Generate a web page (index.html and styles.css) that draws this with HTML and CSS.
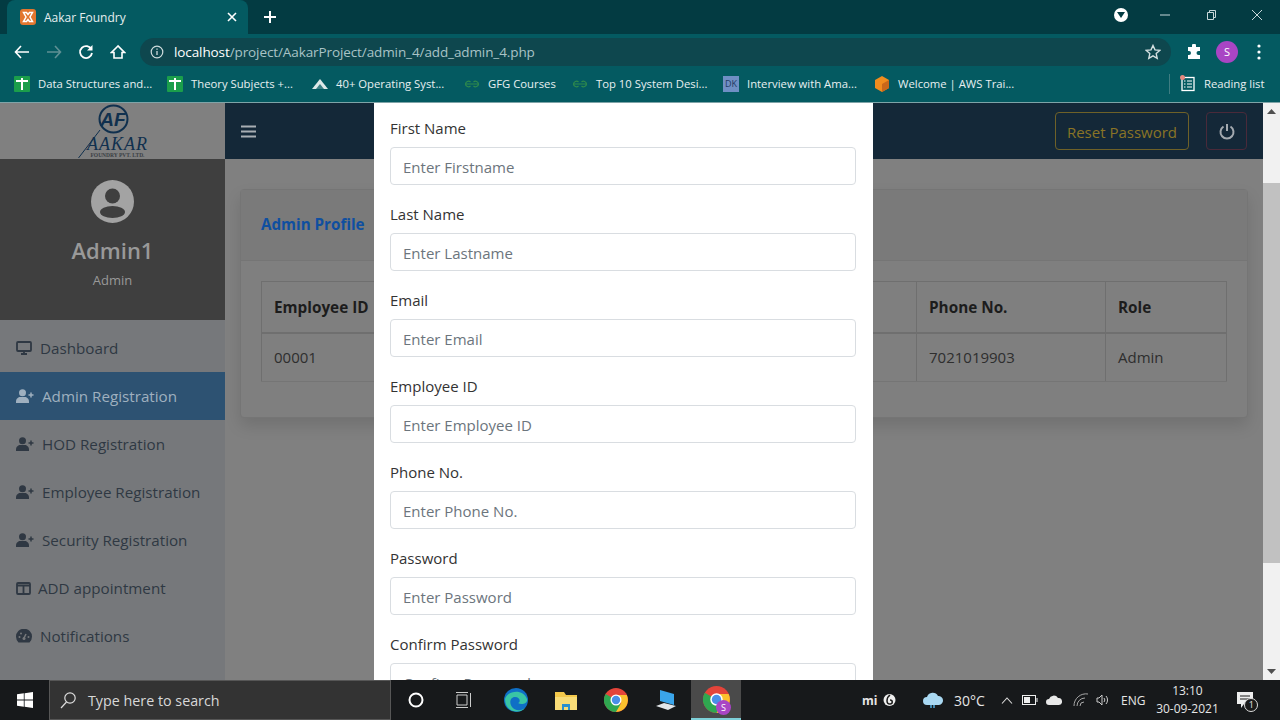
FILE: index.html
```html
<!DOCTYPE html>
<html lang="en">
<head>
  <meta charset="UTF-8" />
  <title>Aakar Foundry</title>
  <link rel="stylesheet" href="styles.css">
</head>
<body>
  <div class="tabstrip">
    <div class="tab">
      <svg class="tab-icon" width="16" height="16" viewBox="0 0 16 16"><rect width="16" height="16" rx="3" fill="#e2762f"/><path d="M3.500 3.500h3L8 5.500l1.500-2h3L10 8l2.500 4.500h-3L8 10.500l-1.500 2h-3L6 8z" fill="none" stroke="#fff" stroke-width="1.500"/></svg>
      <span class="tab-title">Aakar Foundry</span>
      <svg width="10" height="10" viewBox="0 0 10 10"><path d="M1 1l8 8M9 1l-8 8" stroke="#fff" stroke-width="1.600"/></svg>
    </div>
    <svg class="new-tab" width="12" height="12" viewBox="0 0 12 12"><path d="M6 0v12M0 6h12" stroke="#fff" stroke-width="2"/></svg>
    <div class="window-btns">
      <span class="profile-dot"><svg width="8" height="6" viewBox="0 0 8 6"><path d="M0 0h8L4 6z" fill="#033b42"/></svg></span>
      <svg width="46" height="12" viewBox="0 0 46 12"><path d="M18 6h10" stroke="#c8d8da"/></svg>
      <svg width="46" height="12" viewBox="0 0 46 12"><path d="M19.500 3.500h6v7h-6zM21.500 3.500v-2h6v7h-2" fill="none" stroke="#c8d8da"/></svg>
      <svg width="46" height="12" viewBox="0 0 46 12"><path d="M18 1l10 10M28 1L18 11" stroke="#c8d8da"/></svg>
    </div>
  </div>

  <div class="toolbar">
    <svg width="16" height="14" viewBox="0 0 16 14"><path d="M15 7H2M7 1L1.500 7 7 13" fill="none" stroke="#fff" stroke-width="1.600"/></svg>
    <svg width="16" height="14" viewBox="0 0 16 14"><path d="M1 7h13M9 1l5.500 6L9 13" fill="none" stroke="#5f9094" stroke-width="1.600"/></svg>
    <svg width="16" height="16" viewBox="0 0 16 16"><path d="M13.500 5.500A6 6 0 1 0 14 9" fill="none" stroke="#fff" stroke-width="1.800"/><path d="M14.500 1v5.500H9z" fill="#fff"/></svg>
    <svg width="16" height="16" viewBox="0 0 16 16"><path d="M8 2L1.500 8.500h2.500v5.500h8V8.500h2.500z" fill="none" stroke="#fff" stroke-width="1.600"/></svg>
    <div class="omnibox">
      <svg width="14" height="14" viewBox="0 0 14 14"><circle cx="7" cy="7" r="5.800" fill="none" stroke="#cfdcdd" stroke-width="1.200"/><path d="M7 6v4M7 3.500v1.200" stroke="#cfdcdd" stroke-width="1.300"/></svg>
      <span class="url"><b>localhost</b>/project/AakarProject/admin_4/add_admin_4.php</span>
      <svg class="star" width="16" height="16" viewBox="0 0 16 16"><path d="M8 1.500l2 4.400 4.800.5-3.600 3.200 1 4.700L8 11.900l-4.200 2.400 1-4.700L1.200 6.400 6 5.900z" fill="none" stroke="#d5e0e1" stroke-width="1.400"/></svg>
    </div>
    <svg class="puzzle" width="16" height="16" viewBox="0 0 16 16"><path d="M6 1.500a2 2 0 0 1 4 0V3h4v4h-1.500a2 2 0 0 0 0 4H14v4H2v-4h1a2 2 0 0 0 0-4H2V3h4z" fill="#fff"/></svg>
    <span class="avatar">S</span>
    <svg class="kebab" width="4" height="16" viewBox="0 0 4 16"><circle cx="2" cy="2" r="1.600" fill="#fff"/><circle cx="2" cy="8" r="1.600" fill="#fff"/><circle cx="2" cy="14" r="1.600" fill="#fff"/></svg>
  </div>

  <div class="bookmarks">
    <div class="bookmark"><span class="sheet-icon"></span>Data Structures and...</div>
    <div class="bookmark"><span class="sheet-icon"></span>Theory Subjects +...</div>
    <div class="bookmark"><svg width="16" height="10" viewBox="0 0 16 10"><path d="M0 10L8 0l8 10z" fill="#dfe8e8"/><path d="M4 10l4-5 4 5z" fill="#3c7f84"/></svg>40+ Operating Syst...</div>
    <div class="bookmark"><svg class="gfg" width="16" height="8" viewBox="0 0 16 8"><path d="M8 4H1.500a3 3 0 0 1 5-2M8 4h6.500a3 3 0 0 0-5-2M1.500 4a3 3 0 0 0 5 2M14.500 4a3 3 0 0 1-5 2" fill="none" stroke="#2f8a4c" stroke-width="1.200"/></svg>GFG Courses</div>
    <div class="bookmark"><svg class="gfg" width="16" height="8" viewBox="0 0 16 8"><path d="M8 4H1.500a3 3 0 0 1 5-2M8 4h6.500a3 3 0 0 0-5-2M1.500 4a3 3 0 0 0 5 2M14.500 4a3 3 0 0 1-5 2" fill="none" stroke="#2f8a4c" stroke-width="1.200"/></svg>Top 10 System Desi...</div>
    <div class="bookmark"><span class="dk-icon">DK</span>Interview with Ama...</div>
    <div class="bookmark"><svg width="16" height="18" viewBox="0 0 16 18"><path d="M8 1l7 4v8l-7 4-7-4V5z" fill="#f08c1e"/><path d="M8 9l7-4v8l-7 4z" fill="#c9671a"/></svg>Welcome | AWS Trai...</div>
    <div class="reading-list">
      <svg width="16" height="17" viewBox="0 0 16 17"><rect x="2" y="2.500" width="12" height="13" fill="none" stroke="#fff" stroke-width="1.300"/><path d="M4 6h1.500M7 6h5M4 9h1.500M7 9h5M4 12h1.500M7 12h5" stroke="#fff"/><circle cx="2.500" cy="2.500" r="2.500" fill="#e58a80"/></svg>
      Reading list
    </div>
  </div>

  <div class="viewport">
    <div class="app">
      <aside class="sidebar">
        <div class="logo">
          <svg width="76" height="56" viewBox="0 0 76 56">
            <ellipse cx="38.500" cy="16" rx="14" ry="13.500" fill="none" stroke="#10304e" stroke-width="2"/>
            <text x="38" y="23" class="logo-mark">AF</text>
            <path d="M3.500 55L25 27" stroke="#10304e"/>
            <text x="42.500" y="47" class="logo-name">AAKAR</text>
            <text x="42.500" y="54" class="logo-sub">FOUNDRY PVT. LTD.</text>
          </svg>
        </div>
        <div class="profile">
          <svg width="43" height="43" viewBox="0 0 43 43"><circle cx="21.500" cy="21.500" r="21.500" fill="#a3a3a3"/><circle cx="21.500" cy="16" r="7.500" fill="#3f3f3f"/><ellipse cx="21.500" cy="32" rx="12.500" ry="6" fill="#3f3f3f"/></svg>
          <div class="profile-name">Admin1</div>
          <div class="profile-role">Admin</div>
        </div>
        <nav class="menu">
          <a class="menu-item"><svg class="menu-icon" width="16" height="14" viewBox="0 0 16 14"><rect x="1" y="1" width="14" height="9" rx="1" fill="none" stroke="currentColor" stroke-width="1.800"/><path d="M5 13h6M8 10v3" stroke="currentColor" stroke-width="1.800"/></svg>Dashboard</a>
          <a class="menu-item active"><svg class="menu-icon" width="18" height="14" viewBox="0 0 18 14"><use href="#user-plus"/></svg>Admin Registration</a>
          <a class="menu-item"><svg class="menu-icon" width="18" height="14" viewBox="0 0 18 14"><use href="#user-plus"/></svg>HOD Registration</a>
          <a class="menu-item"><svg class="menu-icon" width="18" height="14" viewBox="0 0 18 14"><use href="#user-plus"/></svg>Employee Registration</a>
          <a class="menu-item"><svg class="menu-icon" width="18" height="14" viewBox="0 0 18 14"><use href="#user-plus"/></svg>Security Registration</a>
          <a class="menu-item"><svg class="menu-icon narrow" width="15" height="13" viewBox="0 0 15 13"><rect x="1" y="1" width="13" height="11" rx="1" fill="none" stroke="currentColor" stroke-width="1.800"/><path d="M1 3.500h13M7.500 3v9" stroke="currentColor" stroke-width="1.800"/></svg>ADD appointment</a>
          <a class="menu-item"><svg class="menu-icon" width="16" height="14" viewBox="0 0 16 14"><path d="M2.500 13.500A8 8 0 1 1 13.500 13.500z" fill="currentColor"/><path d="M8 9l2-4" stroke="#76787b" stroke-width="1.500"/><circle cx="8" cy="9.500" r="1.500" fill="#76787b"/><circle cx="3.500" cy="8" r="1" fill="#76787b"/><circle cx="12.500" cy="8" r="1" fill="#76787b"/><circle cx="5" cy="4.500" r="1" fill="#76787b"/></svg>Notifications</a>
        </nav>
      </aside>

      <div class="content">
        <header class="topbar">
          <svg width="15" height="13" viewBox="0 0 15 13"><path d="M0 1.500h15M0 6.500h15M0 11.500h15" stroke="#a8aeb3" stroke-width="2.200"/></svg>
          <div class="topbar-actions">
            <button class="btn-reset">Reset Password</button>
            <button class="btn-power"><svg width="16" height="17" viewBox="0 0 16 17"><path d="M4.500 3.500a6.500 6.500 0 1 0 7 0" fill="none" stroke="#a4aab0" stroke-width="2"/><path d="M8 1v7" stroke="#a4aab0" stroke-width="2"/></svg></button>
          </div>
        </header>
        <main class="main">
          <section class="card">
            <div class="card-header">Admin Profile</div>
            <div class="card-body">
              <table class="profile-table">
                <thead>
                  <tr><th class="col-id">Employee ID</th><th class="col-name"></th><th class="col-email"></th><th class="col-phone">Phone No.</th><th>Role</th></tr>
                </thead>
                <tbody>
                  <tr><td>00001</td><td></td><td></td><td>7021019903</td><td>Admin</td></tr>
                </tbody>
              </table>
            </div>
          </section>
        </main>
      </div>

      <div class="modal">
        <label class="field">First Name<input type="text" placeholder="Enter Firstname"></label>
        <label class="field">Last Name<input type="text" placeholder="Enter Lastname"></label>
        <label class="field">Email<input type="text" placeholder="Enter Email"></label>
        <label class="field">Employee ID<input type="text" placeholder="Enter Employee ID"></label>
        <label class="field">Phone No.<input type="text" placeholder="Enter Phone No."></label>
        <label class="field">Password<input type="text" placeholder="Enter Password"></label>
        <label class="field">Confirm Password<input type="text" placeholder="Confirm Password"></label>
      </div>
    </div>

    <div class="scrollbar">
      <svg width="9" height="5" viewBox="0 0 9 5"><path d="M0 5L4.500 0 9 5z" fill="#505050"/></svg>
      <div class="scroll-track"><div class="scroll-thumb"></div></div>
      <svg width="9" height="5" viewBox="0 0 9 5"><path d="M0 0l4.500 5L9 0z" fill="#505050"/></svg>
    </div>
  </div>

  <footer class="taskbar">
    <div class="start"><svg width="16" height="16" viewBox="0 0 16 16"><path d="M0 2.300l6.800-1v6.300H0zM7.600 1.200L16 0v7.600H7.600zM0 8.400h6.800v6.300l-6.800-1zM7.600 8.400H16V16l-8.400-1.200z" fill="#fff"/></svg></div>
    <div class="search">
      <svg width="16" height="18" viewBox="0 0 16 18"><circle cx="10" cy="7" r="5.200" fill="none" stroke="#ddd" stroke-width="1.200"/><path d="M6.500 11L1 17" stroke="#ddd" stroke-width="1.200"/></svg>
      <span>Type here to search</span>
    </div>
    <div class="task"><svg width="16" height="16" viewBox="0 0 16 16"><circle cx="8" cy="8" r="6.500" fill="none" stroke="#fff" stroke-width="2"/></svg></div>
    <div class="task"><svg class="task-view" width="16" height="16" viewBox="0 0 16 16"><path d="M1 3h10v10H1zM0 .5h12M0 15.500h12M14.500 1v14" fill="none" stroke="#ccc"/></svg></div>
    <div class="task"><svg width="26" height="26" viewBox="0 0 26 26"><circle cx="13" cy="13" r="12" fill="#0f6fc6"/><path d="M2 12C4 4 20 1 24 12c1 5-6 6-9 4 3-1 2-6-3-6-5 0-6 6-3 10 2 3 8 5 13 1-4 6-20 5-20-9z" fill="#39c5a5"/></svg></div>
    <div class="task"><svg width="24" height="22" viewBox="0 0 24 22"><path d="M1 3h9l2 3h11v15H1z" fill="#f4c84b"/><path d="M1 8h22v13H1z" fill="#f9dc77"/><path d="M8 15h8v6h-2v-3h-4v3H8z" fill="#2a8fd0"/></svg></div>
    <div class="task"><svg width="24" height="24" viewBox="0 0 24 24"><use href="#chrome"/></svg></div>
    <div class="task"><svg width="24" height="22" viewBox="0 0 24 22"><path d="M6 1l14 4v11L6 12z" fill="#3aa5ea"/><path d="M2 17l8-3 12 3-8 4z" fill="#e2e6ea"/></svg></div>
    <div class="task task-active">
      <svg width="27" height="27" viewBox="0 0 24 24"><use href="#chrome"/></svg>
      <span class="task-badge">S</span>
    </div>
    <div class="tray">
      <span class="mi">mi</span>
      <svg class="swirl" width="13" height="14" viewBox="0 0 13 14"><circle cx="6.500" cy="7" r="6" fill="#eee"/><path d="M7 2C3 5 3 11 7 11c3 0 3-4 0-4" fill="none" stroke="#1a1a1a" stroke-width="1.500"/></svg>
      <svg class="cloud" width="22" height="18" viewBox="0 0 22 18"><path d="M5 14a4 4 0 0 1 0-8 6 6 0 0 1 11-1 4.500 4.500 0 0 1 1 9z" fill="#a9d8f2"/><path d="M9 14v3M12 14v3" stroke="#4ea9de" stroke-width="1.500"/></svg>
      <span class="temp">30°C</span>
      <svg class="chev" width="12" height="7" viewBox="0 0 12 7"><path d="M1 6.500L6 1l5 5.500" fill="none" stroke="#ddd" stroke-width="1.100"/></svg>
      <svg class="batt" width="16" height="10" viewBox="0 0 16 10"><rect x=".5" y=".5" width="13" height="9" fill="none" stroke="#eee"/><rect x="2" y="2" width="6" height="6" fill="#eee"/><path d="M15 3v4" stroke="#eee"/></svg>
      <svg class="drive" width="16" height="10" viewBox="0 0 16 10"><path d="M3 10a3 3 0 0 1 0-6 5 5 0 0 1 9-1 3.500 3.500 0 0 1 1 7z" fill="#e8e8e8"/></svg>
      <svg class="wifi" width="16" height="14" viewBox="0 0 16 14"><path d="M1 13A12 12 0 0 1 15 1M4 13a8 8 0 0 1 8-8M7 13a4 4 0 0 1 4-4" fill="none" stroke="#a8a8a8"/></svg>
      <svg class="speaker" width="14" height="14" viewBox="0 0 14 14"><path d="M1 5h2l3-3v10L3 9H1zM8 5a3 3 0 0 1 0 4M10 3a6 6 0 0 1 0 8" fill="none" stroke="#ccc"/></svg>
      <span class="lang">ENG</span>
      <div class="clock"><span>13:10</span><span>30-09-2021</span></div>
      <div class="notify">
        <svg width="17" height="17" viewBox="0 0 17 17"><path d="M0 0h16v12H7l-3 4v-4H0z" fill="#eee"/><path d="M3 4h10M3 7h10" stroke="#1a1a1a"/></svg>
        <span class="notify-count">1</span>
      </div>
    </div>
  </footer>

  <svg class="defs" width="0" height="0">
    <symbol id="user-plus" viewBox="0 0 18 14">
      <circle cx="6.500" cy="3.800" r="3.500" fill="currentColor"/>
      <path d="M0 14v-1.500C0 9.500 2.500 8 4 8h5c1.500 0 4 1.500 4 4.500V14z" fill="currentColor"/>
      <path d="M12.500 6h5M15 3.500v5" stroke="currentColor" stroke-width="1.500"/>
    </symbol>
    <symbol id="chrome" viewBox="0 0 24 24">
      <circle cx="12" cy="12" r="12" fill="#e4443a"/>
      <path d="M12 12L1.600 6A12 12 0 0 0 12 24l5-7z" fill="#2fa750"/>
      <path d="M12 7h10.800A12 12 0 0 1 12 24l5.200-9z" fill="#fbc02d"/>
      <circle cx="12" cy="12" r="5.500" fill="#fff"/>
      <circle cx="12" cy="12" r="4.200" fill="#4a8fe8"/>
    </symbol>
  </svg>
</body>
</html>
```

FILE: styles.css
```css
* {
  box-sizing: border-box;
}
body {
  margin: 0;
  width: 1280px;
  height: 720px;
  overflow: hidden;
  display: flex;
  flex-direction: column;
  font-family: "Open Sans", "Noto Sans", sans-serif;
  background: #808080;
}
svg {
  flex: none;
  display: block;
}
.defs {
  position: absolute;
}

/* browser chrome */
.tabstrip {
  height: 34px;
  flex: none;
  display: flex;
  align-items: center;
  padding-left: 7px;
  background: #033b42;
  color: #fff;
}
.tab {
  width: 241px;
  height: 34px;
  display: flex;
  align-items: center;
  padding: 0 11px 0 13px;
  background: #045a61;
  border-radius: 8px 8px 0 0;
}
.tab-icon {
  margin-right: 8px;
}
.tab-title {
  flex: 1;
  font-size: 12px;
  color: #e4eeef;
}
.new-tab {
  margin-left: 16px;
}
.window-btns {
  margin-left: auto;
  display: flex;
  align-items: center;
  margin-top: -4px;
}
.profile-dot {
  width: 14px;
  height: 14px;
  margin-right: 14px;
  border-radius: 50%;
  background: #fff;
  display: flex;
  align-items: center;
  justify-content: center;
}
.toolbar {
  height: 36px;
  flex: none;
  display: flex;
  align-items: center;
  padding-left: 14px;
  gap: 16px;
  background: #045a61;
}
.omnibox {
  width: 1031px;
  height: 28px;
  margin-left: -2px;
  display: flex;
  align-items: center;
  padding: 0 10px;
  border-radius: 14px;
  background: #0e474e;
}
.url {
  flex: 1;
  margin-left: 10px;
  font-size: 13.500px;
  color: #a9c3c6;
  letter-spacing: -.1px;
}
.url b {
  font-weight: 400;
  color: #fff;
}
.puzzle {
  margin-left: -1px;
}
.avatar {
  width: 22px;
  height: 22px;
  margin-left: -2px;
  border-radius: 50%;
  background: #a945c4;
  color: #fff;
  font-size: 11px;
  line-height: 22px;
  text-align: center;
}
.kebab {
  margin-left: 3px;
}
.bookmarks {
  height: 33px;
  flex: none;
  display: grid;
  grid-template-columns: 153px 145px 152px 108px 151px 151px 1fr 111px;
  align-items: center;
  padding: 0 0 5px 14px;
  background: #045a61;
  border-bottom: 1px solid #7fa4a8;
  color: #e8f0f1;
  font-size: 11.300px;
}
.bookmark {
  display: flex;
  align-items: center;
  gap: 8px;
  white-space: nowrap;
}
.sheet-icon {
  width: 16px;
  height: 16px;
  background:
    linear-gradient(#fff, #fff) 50% 50% / 2px 12px no-repeat,
    linear-gradient(#fff, #fff) 50% 4px / 12px 2px no-repeat,
    #1b9e4b;
  border-radius: 1px;
}
.dk-icon {
  width: 16px;
  height: 16px;
  background: #6f8fc4;
  color: #233a63;
  font-size: 9px;
  line-height: 16px;
  text-align: center;
}
.reading-list {
  height: 20px;
  display: flex;
  align-items: center;
  gap: 8px;
  border-left: 1px solid #3f7d82;
  padding-left: 10px;
  white-space: nowrap;
}

/* page */
.viewport {
  height: 577px;
  flex: none;
  display: flex;
}
.app {
  width: 1263px;
  position: relative;
  display: flex;
  overflow: hidden;
}
.sidebar {
  width: 225px;
  flex: none;
  background: #76787b;
}
.logo {
  height: 56px;
  display: flex;
  justify-content: center;
  background: #808080;
}
.logo-mark {
  font: italic 700 19px "Liberation Sans", sans-serif;
  text-anchor: middle;
  fill: #10304e;
}
.logo-name {
  font: italic 400 18px "Liberation Serif", serif;
  letter-spacing: 1px;
  text-anchor: middle;
  fill: #10304e;
}
.logo-sub {
  font: 700 5.500px "Liberation Serif", serif;
  text-anchor: middle;
  fill: #3a3f44;
}
.profile {
  height: 161px;
  padding-top: 21px;
  display: flex;
  flex-direction: column;
  align-items: center;
  background: #3f3f3f;
  color: #999;
}
.profile-name {
  margin-top: 9px;
  font-size: 22px;
  font-weight: 600;
  line-height: 36px;
}
.profile-role {
  margin-top: 2px;
  font-size: 13px;
  line-height: 20px;
}
.menu {
  padding-top: 4px;
}
.menu-item {
  height: 48px;
  display: flex;
  align-items: center;
  padding-left: 16px;
  font-size: 15.200px;
  color: #2f3843;
}
.menu-item.active {
  background: #2d5272;
  color: #9fb0bf;
}
.menu-icon {
  margin-right: 8px;
}
.menu-icon.narrow {
  margin-right: 7px;
}
.content {
  flex: 1;
  min-width: 0;
  display: flex;
  flex-direction: column;
}
.topbar {
  height: 56px;
  flex: none;
  display: flex;
  align-items: center;
  justify-content: space-between;
  padding: 0 16px;
  background: #142838;
}
.topbar-actions {
  display: flex;
  gap: 17px;
}
.btn-reset {
  width: 134px;
  height: 38px;
  padding-top: 2px;
  border: 1px solid #6f6128;
  border-radius: 4px;
  background: transparent;
  color: #8a7426;
  font: 15px "Open Sans", sans-serif;
}
.btn-power {
  width: 41px;
  height: 38px;
  display: flex;
  align-items: center;
  justify-content: center;
  border: 1px solid #4a2a3a;
  border-radius: 4px;
  background: transparent;
}
.main {
  flex: 1;
  padding: 30px 15px 0;
  background: #808080;
}
.card {
  height: 229px;
  background: #7f7f7f;
  border: 1px solid #757575;
  border-radius: 4px;
  box-shadow: 0 8px 16px rgba(0,0,0,.12);
}
.card-header {
  height: 71px;
  padding-left: 20px;
  font-size: 15.200px;
  font-weight: 700;
  line-height: 69px;
  color: #0f4fa0;
  background: #7a7a7a;
  border-bottom: 1px solid #757575;
}
.card-body {
  padding: 20px 20px 0;
}
.profile-table {
  width: 966px;
  border-collapse: collapse;
  table-layout: fixed;
  color: #2e2e2e;
  font-size: 15px;
}
.profile-table th,
.profile-table td {
  padding: 0 12px;
  border: 1px solid #6f6f6f;
  text-align: left;
}
.profile-table th {
  height: 51px;
  color: #1c1c1c;
  border-bottom-width: 2px;
  font-size: 15.300px;
  white-space: nowrap;
}
.profile-table td {
  height: 49px;
  border-bottom: 1px solid #757575;
}
.col-id {
  width: 122px;
}
.col-name {
  width: 200px;
}
.col-email {
  width: 333px;
}
.col-phone {
  width: 189px;
}

/* modal */
.modal {
  position: absolute;
  top: 0;
  left: 374px;
  bottom: 0;
  width: 499px;
  padding: 13px 16px 0;
  background: #fff;
  overflow: hidden;
}
.field {
  display: block;
  margin-bottom: 17px;
  font-size: 15px;
  line-height: 24px;
  color: #333;
}
.field input {
  display: block;
  width: 466px;
  height: 38px;
  margin-top: 7px;
  padding: 2px 12px 0;
  border: 1px solid #d9dde1;
  border-radius: 4px;
  font: 15px "Open Sans", sans-serif;
}
.field input::placeholder {
  color: #6c757d;
}

.scrollbar {
  width: 17px;
  display: flex;
  flex-direction: column;
  align-items: center;
  background: #f1f1f1;
  padding: 6px 0;
}
.scroll-track {
  flex: 1;
  width: 100%;
  padding-top: 69px;
  margin-bottom: 6px;
}
.scroll-thumb {
  height: 380px;
  background: #c1c1c1;
}

/* taskbar */
.taskbar {
  height: 40px;
  flex: none;
  display: flex;
  align-items: center;
  background: #17191b;
  color: #e6e6e6;
}
.start {
  width: 49px;
  display: flex;
  justify-content: center;
}
.search {
  width: 342px;
  height: 40px;
  display: flex;
  align-items: center;
  gap: 12px;
  padding-left: 10px;
  background: #333;
  border: 1px solid #565656;
  font-size: 14.300px;
  color: #d8d8d8;
}
.task {
  width: 50px;
  height: 40px;
  display: flex;
  align-items: center;
  justify-content: center;
  position: relative;
}
.task-view {
  margin-left: -5px;
}
.task-active {
  background: #4a4a4a;
  border-bottom: 2px solid #7ed0d8;
}
.task-badge {
  position: absolute;
  left: 25px;
  top: 20px;
  width: 15px;
  height: 15px;
  border-radius: 50%;
  background: #a945c4;
  color: #fff;
  font-size: 9px;
  line-height: 15px;
  text-align: center;
}
.tray {
  flex: 1;
  display: flex;
  align-items: center;
  padding-left: 121px;
  font-size: 14px;
}
.mi {
  width: 21px;
  font-weight: 700;
  font-size: 12px;
}
.swirl {
  margin-right: 26px;
}
.temp {
  margin-left: 10px;
  width: 39px;
}
.chev {
  margin-left: 8px;
}
.batt {
  margin-left: 9px;
}
.drive {
  margin-left: 8px;
}
.wifi {
  margin-left: 11px;
}
.speaker {
  margin-left: 7px;
}
.lang {
  margin-left: 11px;
  font-size: 12px;
}
.clock {
  margin-left: 11px;
  width: 62px;
  display: flex;
  flex-direction: column;
  align-items: center;
  font-size: 12px;
  line-height: 18px;
  white-space: nowrap;
}
.notify {
  position: relative;
  margin-left: 19px;
}
.notify-count {
  position: absolute;
  left: 7px;
  top: 6px;
  width: 14px;
  height: 14px;
  border-radius: 50%;
  background: #1a1a1a;
  border: 1px solid #ddd;
  font-size: 9px;
  line-height: 12px;
  text-align: center;
}
```
